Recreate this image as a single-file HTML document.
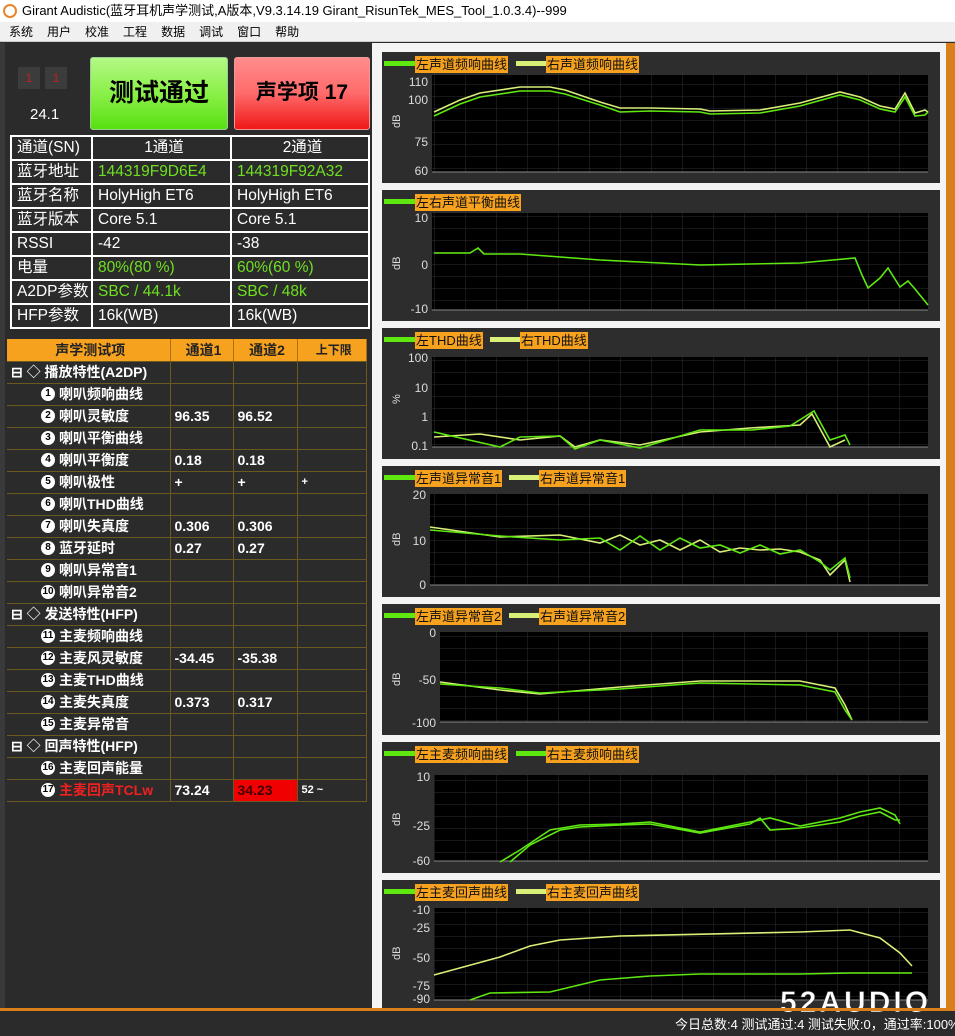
<!DOCTYPE html>
<html><head><meta charset="utf-8"><style>
*{margin:0;padding:0;box-sizing:border-box}
body{width:955px;height:1036px;overflow:hidden;background:#2b2b2b;font-family:"Liberation Sans","Noto Sans CJK SC",sans-serif;position:relative}
.abs{position:absolute}
#title{left:0;top:0;width:955px;height:22px;background:#fff;font-size:13px;color:#000;line-height:22px;padding-left:22px;white-space:nowrap}
#menu{left:0;top:22px;width:955px;height:20px;background:#f0f0f0;font-size:12px;line-height:20px;border-bottom:1px solid #ccc}
#menu span{margin-left:9px;margin-right:5px}
.btn{font-weight:bold;font-size:25px;text-align:center;line-height:70px;color:#000;border-radius:3px}
table{border-collapse:collapse}
#info{left:10px;top:135px;width:360px;font-size:15.5px;color:#fff}
#info td{border:2px solid #fff;height:24px;line-height:20px;padding:0 0 0 5px;white-space:nowrap;background:#2b2b2b;vertical-align:middle}
.g{color:#6fe020}
#tt{left:7px;top:339px;width:360px;font-size:14px;color:#fff;font-weight:bold;table-layout:fixed}
#tt td{height:22px;line-height:20px;padding:0 0 0 4px;border-bottom:1px solid #6b5a20;border-right:1px solid #6b5a20;white-space:nowrap;overflow:hidden;vertical-align:middle}
#tt tr.h td{background:#f7a21e;color:#222;text-align:center;border-right:1px solid #b07010}
.n{display:inline-block;width:14px;height:14px;border-radius:50%;background:#fff;color:#000;font-size:10px;text-align:center;line-height:14px;margin-right:4px;vertical-align:middle;position:relative;top:-1px}
.panel{position:absolute;left:382px;width:558px;height:131px;background:#2d2d2d}
.leg{position:absolute;top:4px;height:17px;font-size:13px;background:#f7a21e;color:#111;line-height:17px;padding:0 1px}
.ln{position:absolute;top:9px;height:5px;width:31px}
</style></head><body>
<div id="title" class="abs"><span style="position:absolute;left:3px;top:4px;width:14px;height:14px;border-radius:50%;border:2px solid #e8862a"></span>Girant Audistic(蓝牙耳机声学测试,A版本,V9.3.14.19 Girant_RisunTek_MES_Tool_1.0.3.4)--999</div>
<div id="menu" class="abs"><span>系统</span><span>用户</span><span>校准</span><span>工程</span><span>数据</span><span>调试</span><span>窗口</span><span>帮助</span></div>
<div class="abs" style="left:0;top:43px;width:5px;height:968px;background:#3a3a3a"></div>
<div class="abs" style="left:372px;top:43px;width:574px;height:968px;background:#f4f4f4"></div>
<div class="abs" style="left:946px;top:43px;width:9px;height:968px;background:#d9801a"></div>
<div class="abs" style="left:18px;top:67px;width:22px;height:22px;background:#3c3c3c;color:#c02020;font-size:12px;text-align:center;line-height:22px">1</div>
<div class="abs" style="left:45px;top:67px;width:22px;height:22px;background:#3c3c3c;color:#c02020;font-size:12px;text-align:center;line-height:22px">1</div>
<div class="abs" style="left:30px;top:106px;color:#fff;font-size:15px">24.1</div>
<div class="abs btn" style="left:90px;top:57px;width:138px;height:73px;background:linear-gradient(#b4f884,#8af048 50%,#58e010);border:1px solid #9c9">测试通过</div>
<div class="abs btn" style="left:234px;top:57px;width:136px;height:73px;background:linear-gradient(#ff8c8c,#ff6a6a 50%,#f01818);border:1px solid #e99;font-size:21px">声学项 17</div>
<table id="info" class="abs">
<tr><td style="width:81px">通道(SN)</td><td style="width:139px;text-align:center">1通道</td><td style="text-align:center">2通道</td></tr>
<tr><td>蓝牙地址</td><td class="g">144319F9D6E4</td><td class="g">144319F92A32</td></tr>
<tr><td>蓝牙名称</td><td>HolyHigh ET6</td><td>HolyHigh ET6</td></tr>
<tr><td>蓝牙版本</td><td>Core 5.1</td><td>Core 5.1</td></tr>
<tr><td>RSSI</td><td>-42</td><td>-38</td></tr>
<tr><td>电量</td><td class="g">80%(80 %)</td><td class="g">60%(60 %)</td></tr>
<tr><td>A2DP参数</td><td class="g">SBC / 44.1k</td><td class="g">SBC / 48k</td></tr>
<tr><td>HFP参数</td><td>16k(WB)</td><td>16k(WB)</td></tr>
</table>
<table id="tt" class="abs">
<colgroup><col style="width:163px"><col style="width:63px"><col style="width:64px"><col></colgroup>
<tr class="h"><td>声学测试项</td><td>通道1</td><td>通道2</td><td style="font-size:12px">上下限</td></tr>
<tr><td>⊟ ◇ 播放特性(A2DP)</td><td></td><td></td><td></td></tr>
<tr><td style="padding-left:34px"><span class="n">1</span>喇叭频响曲线</td><td></td><td></td><td></td></tr>
<tr><td style="padding-left:34px"><span class="n">2</span>喇叭灵敏度</td><td>96.35</td><td>96.52</td><td></td></tr>
<tr><td style="padding-left:34px"><span class="n">3</span>喇叭平衡曲线</td><td></td><td></td><td></td></tr>
<tr><td style="padding-left:34px"><span class="n">4</span>喇叭平衡度</td><td>0.18</td><td>0.18</td><td></td></tr>
<tr><td style="padding-left:34px"><span class="n">5</span>喇叭极性</td><td>+</td><td>+</td><td style="font-size:11px">+</td></tr>
<tr><td style="padding-left:34px"><span class="n">6</span>喇叭THD曲线</td><td></td><td></td><td></td></tr>
<tr><td style="padding-left:34px"><span class="n">7</span>喇叭失真度</td><td>0.306</td><td>0.306</td><td></td></tr>
<tr><td style="padding-left:34px"><span class="n">8</span>蓝牙延时</td><td>0.27</td><td>0.27</td><td></td></tr>
<tr><td style="padding-left:34px"><span class="n">9</span>喇叭异常音1</td><td></td><td></td><td></td></tr>
<tr><td style="padding-left:34px"><span class="n">10</span>喇叭异常音2</td><td></td><td></td><td></td></tr>
<tr><td>⊟ ◇ 发送特性(HFP)</td><td></td><td></td><td></td></tr>
<tr><td style="padding-left:34px"><span class="n">11</span>主麦频响曲线</td><td></td><td></td><td></td></tr>
<tr><td style="padding-left:34px"><span class="n">12</span>主麦风灵敏度</td><td>-34.45</td><td>-35.38</td><td></td></tr>
<tr><td style="padding-left:34px"><span class="n">13</span>主麦THD曲线</td><td></td><td></td><td></td></tr>
<tr><td style="padding-left:34px"><span class="n">14</span>主麦失真度</td><td>0.373</td><td>0.317</td><td></td></tr>
<tr><td style="padding-left:34px"><span class="n">15</span>主麦异常音</td><td></td><td></td><td></td></tr>
<tr><td>⊟ ◇ 回声特性(HFP)</td><td></td><td></td><td></td></tr>
<tr><td style="padding-left:34px"><span class="n">16</span>主麦回声能量</td><td></td><td></td><td></td></tr>
<tr><td style="padding-left:34px;color:#f02020"><span class="n">17</span>主麦回声TCLw</td><td>73.24</td><td style="background:#f00000;color:#400">34.23</td><td style="font-size:11px">52 ~</td></tr>
</table>

<div class="panel" style="top:52px"><div class="ln" style="left:2px;background:#5fe810"></div><div class="leg" style="left:33px">左声道频响曲线</div><div class="ln" style="left:134px;background:#d8f078"></div><div class="leg" style="left:164px">右声道频响曲线</div></div>
<div class="panel" style="top:190px"><div class="ln" style="left:2px;background:#5fe810"></div><div class="leg" style="left:33px">左右声道平衡曲线</div></div>
<div class="panel" style="top:328px"><div class="ln" style="left:2px;background:#5fe810"></div><div class="leg" style="left:33px">左THD曲线</div><div class="ln" style="left:108px;background:#d8f078"></div><div class="leg" style="left:138px">右THD曲线</div></div>
<div class="panel" style="top:466px"><div class="ln" style="left:2px;background:#5fe810"></div><div class="leg" style="left:33px">左声道异常音1</div><div class="ln" style="left:127px;background:#d8f078"></div><div class="leg" style="left:157px">右声道异常音1</div></div>
<div class="panel" style="top:604px"><div class="ln" style="left:2px;background:#5fe810"></div><div class="leg" style="left:33px">左声道异常音2</div><div class="ln" style="left:127px;background:#d8f078"></div><div class="leg" style="left:157px">右声道异常音2</div></div>
<div class="panel" style="top:742px"><div class="ln" style="left:2px;background:#5fe810"></div><div class="leg" style="left:33px">左主麦频响曲线</div><div class="ln" style="left:134px;background:#5fe810"></div><div class="leg" style="left:164px">右主麦频响曲线</div></div>
<div class="panel" style="top:880px;height:128px"><div class="ln" style="left:2px;background:#5fe810"></div><div class="leg" style="left:33px">左主麦回声曲线</div><div class="ln" style="left:134px;background:#d8f078"></div><div class="leg" style="left:164px">右主麦回声曲线</div></div>

<svg class="abs" style="left:0;top:0" width="955" height="1036" font-family="Liberation Sans" font-size="12" fill="#ddd">
<defs><pattern id="gr" width="31" height="12" patternUnits="userSpaceOnUse"><path d="M0 0V12M0 0H31" stroke="#2e2e2e" stroke-width="1" fill="none"/></pattern></defs>
<g id="plots">
<rect x="432" y="75" width="496" height="97" fill="#000"/><rect x="432" y="75" width="496" height="97" fill="url(#gr)"/>
<rect x="432" y="213" width="496" height="97" fill="#000"/><rect x="432" y="213" width="496" height="97" fill="url(#gr)"/>
<rect x="432" y="357" width="496" height="90" fill="#000"/><rect x="432" y="357" width="496" height="90" fill="url(#gr)"/>
<rect x="430" y="494" width="498" height="91" fill="#000"/><rect x="430" y="494" width="498" height="91" fill="url(#gr)"/>
<rect x="440" y="632" width="488" height="90" fill="#000"/><rect x="440" y="632" width="488" height="90" fill="url(#gr)"/>
<rect x="434" y="775" width="494" height="86" fill="#000"/><rect x="434" y="775" width="494" height="86" fill="url(#gr)"/>
<rect x="434" y="908" width="494" height="92" fill="#000"/><rect x="434" y="908" width="494" height="92" fill="url(#gr)"/>
</g>
<g stroke="#888" stroke-width="1">
<path d="M432 172H928M432 310H928M432 447H928M430 585H928M440 722H928M434 861H928M434 1000H928"/>
</g>
<g text-anchor="end">
<text x="428" y="86">110</text><text x="428" y="104">100</text><text x="428" y="146">75</text><text x="428" y="175">60</text>
<text x="428" y="222">10</text><text x="428" y="269">0</text><text x="428" y="313">-10</text>
<text x="428" y="362">100</text><text x="428" y="392">10</text><text x="428" y="421">1</text><text x="428" y="450">0.1</text>
<text x="426" y="499">20</text><text x="426" y="545">10</text><text x="426" y="589">0</text>
<text x="436" y="637">0</text><text x="436" y="684">-50</text><text x="436" y="727">-100</text>
<text x="430" y="781">10</text><text x="430" y="830">-25</text><text x="430" y="865">-60</text>
<text x="430" y="914">-10</text><text x="430" y="932">-25</text><text x="430" y="962">-50</text><text x="430" y="990">-75</text><text x="430" y="1003">-90</text>
</g>
<g font-size="11">
<text transform="translate(400,128) rotate(-90)">dB</text>
<text transform="translate(400,270) rotate(-90)">dB</text>
<text transform="translate(400,404) rotate(-90)">%</text>
<text transform="translate(400,546) rotate(-90)">dB</text>
<text transform="translate(400,686) rotate(-90)">dB</text>
<text transform="translate(400,826) rotate(-90)">dB</text>
<text transform="translate(400,960) rotate(-90)">dB</text>
</g>
<g fill="none" stroke-width="1.6">
<polyline stroke="#d8f078" points="434,112 460,100 480,93 520,87 550,87 565,90 600,102 620,108 650,108 700,109 710,111 760,110 800,103 840,92 860,97 880,106 895,109 905,93 915,113 925,110 928,112"/>
<polyline stroke="#5fe810" points="434,116 460,104 480,97 520,91 550,91 565,94 600,105 620,112 650,111 700,112 710,114 760,113 800,106 840,95 860,100 880,109 895,112 905,97 915,116 925,115 928,112"/>
<polyline stroke="#5fe810" points="434,253 470,253 478,248 484,254 520,254 600,260 700,265 800,263 855,258 862,275 868,288 880,278 888,268 900,287 908,281 915,289 928,305"/>
<polyline stroke="#d8f078" points="434,437 480,434 520,440 560,436 575,447 600,440 640,445 700,432 750,428 800,425 812,414 830,447 845,440"/>
<polyline stroke="#5fe810" points="434,432 500,447 520,437 560,436 575,449 600,440 640,448 700,430 730,430 752,430 790,426 814,411 830,440 845,435 850,445"/>
<polyline stroke="#d8f078" points="430,527 500,537 560,535 600,543 620,535 640,545 660,540 680,550 700,540 720,552 740,548 760,550 780,549 800,552 820,560 830,575 845,560 850,582"/>
<polyline stroke="#5fe810" points="430,530 500,536 560,540 600,538 620,550 640,536 660,550 680,538 700,548 720,545 740,553 760,545 780,554 800,550 820,562 830,570 845,558 850,578"/>
<polyline stroke="#d8f078" points="440,682 500,690 540,694 620,687 700,681 800,681 835,688 845,705 852,720"/>
<polyline stroke="#5fe810" points="440,684 500,688 540,693 620,689 700,683 800,685 835,692 845,710 852,720"/>
<polyline stroke="#5fe810" points="500,862 520,850 550,830 580,825 620,824 650,822 700,832 750,822 770,818 800,826 840,818 860,812 880,808 895,815 900,824"/>
<polyline stroke="#5fe810" points="510,862 530,845 560,830 580,827 620,825 650,824 700,833 750,824 760,818 770,830 800,828 840,822 860,816 880,812 895,820 900,820"/>
<polyline stroke="#d8f078" points="434,975 500,957 530,946 560,940 620,936 800,932 850,930 880,938 900,953 912,966"/>
<polyline stroke="#5fe810" points="470,1000 490,993 550,992 600,980 650,976 700,974 800,974 850,973 912,973"/>
</g>
<text x="780" y="1012" font-size="30" font-weight="bold" fill="#fff" stroke="#333" stroke-width="0.6" letter-spacing="3">52AUDIO</text>
</svg>
<div class="abs" style="left:0;top:1008px;width:955px;height:3px;background:#d9801a"></div>
<div class="abs" style="left:675px;top:1014px;color:#fff;font-size:13px;white-space:nowrap">今日总数:4 测试通过:4 测试失败:0，通过率:100%</div>
</body></html>
